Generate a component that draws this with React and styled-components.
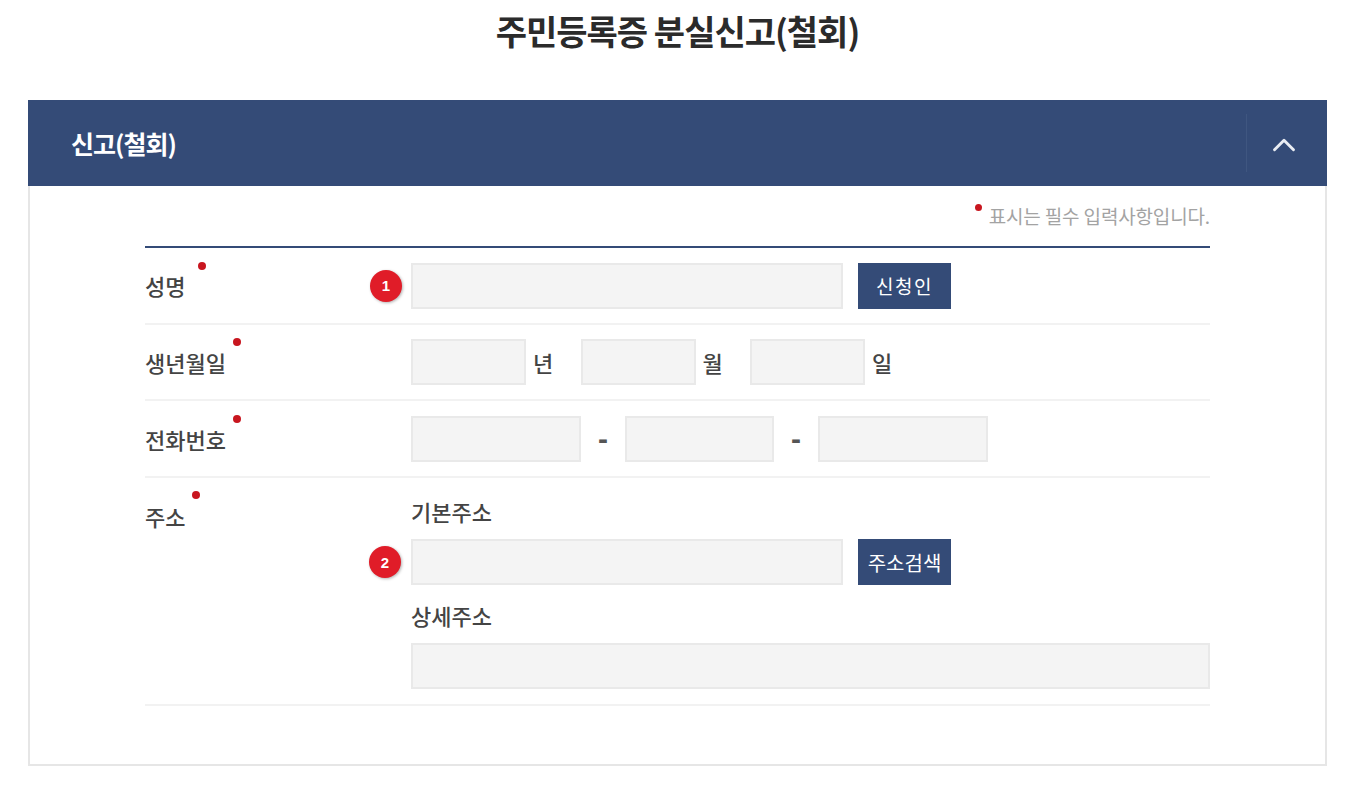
import styled, { createGlobalStyle } from "styled-components";
import { ChevronUp } from "lucide-react";

const GlobalStyle = createGlobalStyle`
  html, body {
    margin: 0;
    padding: 0;
    background: #fff;
  }
  body {
    font-family: "Noto Sans CJK KR", "Noto Sans", sans-serif;
    color: #333;
  }
`;

const Page = styled.div`
  width: 1360px;
  height: 792px;
  padding: 0 33px 0 28px;
  box-sizing: border-box;
  overflow: hidden;
`;

const PageTitle = styled.h1`
  margin: 0;
  height: 100px;
  padding-top: 8px;
  box-sizing: border-box;
  text-align: center;
  font-size: 34px;
  line-height: 46px;
  font-weight: 700;
  letter-spacing: -1px;
  color: #2b2b2b;
`;

const Panel = styled.section`
  height: 666px;
  box-sizing: border-box;
  border: 2px solid #e6e6e6;
  border-top: 0;
`;

const PanelHeader = styled.header`
  height: 86px;
  margin: 0 -2px;
  padding-left: 43px;
  display: flex;
  align-items: center;
  justify-content: space-between;
  background: #344b77;
`;

const PanelTitle = styled.h2`
  margin: 0;
  font-size: 25px;
  font-weight: 700;
  letter-spacing: -1px;
  color: #fff;
`;

const Toggle = styled.div`
  width: 81px;
  height: 58px;
  padding: 3px 7px 0 0;
  box-sizing: border-box;
  display: flex;
  align-items: center;
  justify-content: center;
  border-left: 1px solid #3f5680;
  color: #e9edf3;
`;

const Body = styled.div`
  padding: 0 115px;
`;

const Notice = styled.p`
  margin: 0;
  height: 60px;
  padding-top: 16px;
  box-sizing: border-box;
  text-align: right;
  font-size: 19px;
  line-height: 27px;
  letter-spacing: -0.15px;
  color: #a3a3a3;
`;

const NoticeMark = styled.span`
  display: inline-block;
  width: 7px;
  height: 7px;
  margin-right: 7px;
  border-radius: 50%;
  background: #c8161f;
  vertical-align: 13px;
`;

const Form = styled.div`
  border-top: 2px solid #344b77;
`;

const Row = styled.div`
  display: grid;
  grid-template-columns: 266px 1fr;
  height: ${(p) => p.$height}px;
  box-sizing: border-box;
  border-bottom: 2px solid #f2f2f2;
`;

const Label = styled.div`
  padding-top: ${(p) => p.$top}px;
  font-size: 22px;
  font-weight: 500;
  line-height: 28px;
  color: #444;
`;

const LabelText = styled.span`
  position: relative;
`;

const RequiredDot = styled.i`
  position: absolute;
  left: calc(100% + ${(p) => p.$gap}px);
  top: ${(p) => p.$top}px;
  width: 8px;
  height: 8px;
  border-radius: 50%;
  background: #c8161f;
`;

const Fields = styled.div`
  display: flex;
  align-items: center;
  height: 100%;
`;

const AddressFields = styled.div`
  display: flex;
  flex-direction: column;
  padding-top: 19px;
`;

const FieldWrap = styled.div`
  position: relative;
  display: flex;
  align-items: center;
`;

const Input = styled.div`
  width: ${(p) => p.$width}px;
  height: 46px;
  box-sizing: border-box;
  background: #f4f4f4;
  border: 2px solid #e9e9e9;
`;

const Marker = styled.span`
  position: absolute;
  left: ${(p) => p.$left}px;
  top: 7px;
  width: 32px;
  height: 32px;
  display: flex;
  align-items: center;
  justify-content: center;
  border-radius: 50%;
  background: #e01c28;
  box-shadow: 1px 1px 3px rgba(0, 0, 0, 0.3);
  font-family: "Liberation Sans", sans-serif;
  font-size: 15px;
  font-weight: 700;
  color: #fff;
`;

const ActionButton = styled.div`
  width: 93px;
  height: 46px;
  margin-left: 15px;
  display: flex;
  align-items: center;
  justify-content: center;
  background: #344b77;
  font-size: ${(p) => p.$size}px;
  letter-spacing: ${(p) => p.$spacing}px;
  color: #fff;
`;

const Unit = styled.span`
  width: 54.5px;
  padding-left: 7px;
  box-sizing: border-box;
  font-size: 22px;
  font-weight: 500;
  color: #444;
`;

const Dash = styled.span`
  width: 44px;
  text-align: center;
  font-family: "Liberation Sans", sans-serif;
  font-size: 30px;
  font-weight: 700;
  color: #555;
`;

const SubLabel = styled.div`
  height: 28px;
  margin-top: ${(p) => p.$top}px;
  margin-bottom: 14px;
  font-size: 22px;
  font-weight: 500;
  line-height: 28px;
  color: #444;
`;

export default function App() {
  return (
    <Page>
      <GlobalStyle />
      <PageTitle>주민등록증 분실신고(철회)</PageTitle>
      <Panel>
        <PanelHeader>
          <PanelTitle>신고(철회)</PanelTitle>
          <Toggle>
            <ChevronUp size={38} strokeWidth={1.8} />
          </Toggle>
        </PanelHeader>
        <Body>
          <Notice>
            <NoticeMark />
            표시는 필수 입력사항입니다.
          </Notice>
          <Form>
            <Row $height={77}>
              <Label $top={23}>
                <LabelText>
                  성명
                  <RequiredDot $gap={13} $top={-7} />
                </LabelText>
              </Label>
              <Fields>
                <FieldWrap>
                  <Marker $left={-41}>1</Marker>
                  <Input $width={432} />
                </FieldWrap>
                <ActionButton $size={19} $spacing={1.5}>신청인</ActionButton>
              </Fields>
            </Row>
            <Row $height={76}>
              <Label $top={23}>
                <LabelText>
                  생년월일
                  <RequiredDot $gap={7} $top={-8} />
                </LabelText>
              </Label>
              <Fields>
                <Input $width={115} />
                <Unit>년</Unit>
                <Input $width={115} />
                <Unit>월</Unit>
                <Input $width={115} />
                <Unit>일</Unit>
              </Fields>
            </Row>
            <Row $height={77}>
              <Label $top={24}>
                <LabelText>
                  전화번호
                  <RequiredDot $gap={7} $top={-8} />
                </LabelText>
              </Label>
              <Fields>
                <Input $width={170} />
                <Dash>-</Dash>
                <Input $width={149} />
                <Dash>-</Dash>
                <Input $width={170} />
              </Fields>
            </Row>
            <Row $height={228}>
              <Label $top={24}>
                <LabelText>
                  주소
                  <RequiredDot $gap={7} $top={-9} />
                </LabelText>
              </Label>
              <AddressFields>
                <SubLabel $top={0}>기본주소</SubLabel>
                <FieldWrap>
                  <Marker $left={-42}>2</Marker>
                  <Input $width={432} />
                  <ActionButton $size={20} $spacing={0}>주소검색</ActionButton>
                </FieldWrap>
                <SubLabel $top={16}>상세주소</SubLabel>
                <Input $width={799} />
              </AddressFields>
            </Row>
          </Form>
        </Body>
      </Panel>
    </Page>
  );
}
